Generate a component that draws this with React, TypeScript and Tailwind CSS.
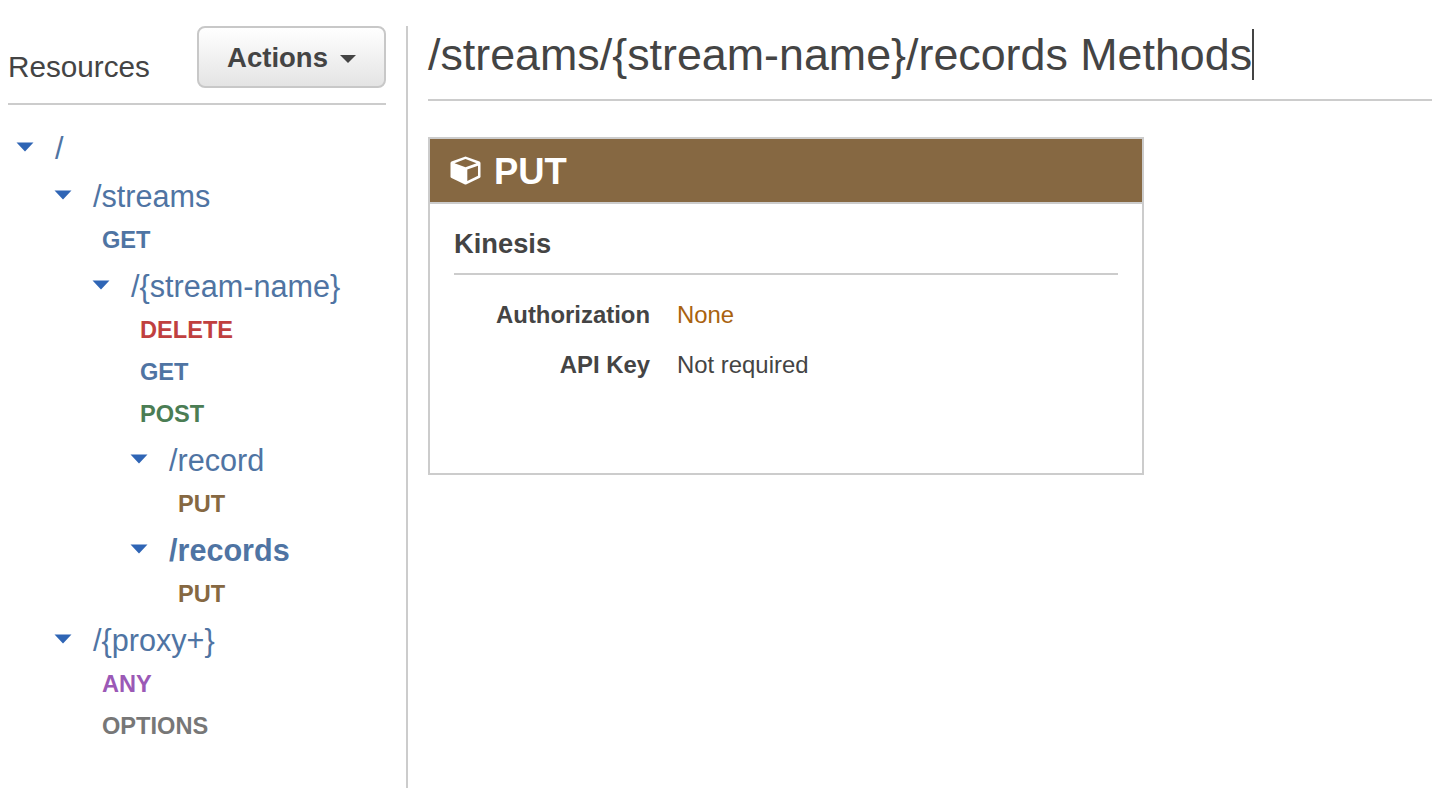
const font = { fontFamily: '"Liberation Sans", Arial, sans-serif' };

function Caret({ className = "" }: { className?: string }) {
  return (
    <svg width="18" height="10" viewBox="0 0 18 10" className={`shrink-0 ${className}`}>
      <path d="M0.5 0.5 H17.5 L9 9.5 Z" fill="#2f65b5" />
    </svg>
  );
}

function Res({ label, ml, bold = false }: { label: string; ml: string; bold?: boolean }) {
  return (
    <div className={`flex h-[48px] items-center pt-[1px] ${ml}`}>
      <Caret className="-mt-[3px]" />
      <span className={`ml-[21px] text-[30.6px] leading-none text-[#4f74a3] ${bold ? "font-bold" : ""}`}>{label}</span>
    </div>
  );
}

function Method({ label, ml, color }: { label: string; ml: string; color: string }) {
  return (
    <div className={`flex h-[42px] items-center text-[23.6px] font-bold leading-none ${ml} ${color}`}>{label}</div>
  );
}

export default function App() {
  return (
    <div className="flex h-[788px] w-[1432px] overflow-hidden bg-white pt-[26px] text-[#444444]" style={font}>
      <aside className="ml-[8px] flex w-[378px] shrink-0 flex-col">
        <div className="flex h-[79px] items-start justify-between border-b-2 border-[#cccccc]">
          <span className="mt-[24px] text-[29.7px] leading-[34px] text-[#444444]">Resources</span>
          <button className="flex h-[62px] w-[189px] items-center justify-center gap-[12px] rounded-[8px] border-2 border-[#c8c8c8] bg-gradient-to-b from-white to-[#e4e4e4] pt-[1px] text-[27.5px] font-bold text-[#444444]">
            Actions
            <svg width="16" height="8" viewBox="0 0 16 8" className="mt-[2px]">
              <path d="M0 0 H16 L8 8 Z" fill="#444444" />
            </svg>
          </button>
        </div>
        <div className="flex flex-col pt-[19px]">
          <Res label="/" ml="ml-[8px]" />
          <Res label="/streams" ml="ml-[46px]" />
          <Method label="GET" ml="ml-[94px]" color="text-[#4f74a3]" />
          <Res label="/{stream-name}" ml="ml-[84px]" />
          <Method label="DELETE" ml="ml-[132px]" color="text-[#c0403f]" />
          <Method label="GET" ml="ml-[132px]" color="text-[#4f74a3]" />
          <Method label="POST" ml="ml-[132px]" color="text-[#4b7d54]" />
          <Res label="/record" ml="ml-[122px]" />
          <Method label="PUT" ml="ml-[170px]" color="text-[#866842]" />
          <Res label="/records" ml="ml-[122px]" bold />
          <Method label="PUT" ml="ml-[170px]" color="text-[#866842]" />
          <Res label="/{proxy+}" ml="ml-[46px]" />
          <Method label="ANY" ml="ml-[94px]" color="text-[#9b59b6]" />
          <Method label="OPTIONS" ml="ml-[94px]" color="text-[#777777]" />
        </div>
      </aside>
      <div className="ml-[20px] w-[2px] shrink-0 bg-[#cccccc]" />
      <main className="ml-[20px] flex min-w-0 flex-1 flex-col">
        <div className="flex h-[75px] items-start border-b-2 border-[#cccccc]">
          <h1 className="mt-[3px] border-r-2 border-[#444444] pb-[1px] text-[44.8px] font-normal leading-[50px] text-[#444444]">
            /streams/{"{stream-name}"}/records Methods
          </h1>
        </div>
        <section className="mt-[36px] flex h-[338px] w-[716px] flex-col border-2 border-[#cccccc]">
          <header className="flex h-[65px] shrink-0 items-center gap-[13px] border-b-2 border-[#cccccc] bg-[#866842] pl-[20px] text-[36.4px] font-bold leading-none text-white">
            <svg width="31" height="29" viewBox="0 0 31 29">
              <path
                d="M15.5 0.5 L29.5 5.5 Q30.5 6 30.5 7 V20.5 Q30.5 21.5 29.5 22 L16 28.5 Q15.5 28.7 15 28.5 L1.5 22 Q0.5 21.5 0.5 20.5 V7 Q0.5 6 1.5 5.5 Z"
                fill="white"
              />
              <path d="M15.5 3 L26.5 7.2 L15.5 11.2 L4.5 7.2 Z" fill="#866842" />
              <path d="M17.3 13.6 L28 9.8 V19.8 L17.3 25 Z" fill="#866842" />
            </svg>
            <span className="pt-[4px]">PUT</span>
          </header>
          <div className="mx-[24px] flex h-[71px] items-center border-b-2 border-[#cccccc] pt-[10px]">
            <h2 className="text-[27.3px] font-bold leading-none text-[#444444]">Kinesis</h2>
          </div>
          <dl className="mt-[26px] grid grid-cols-[196px_1fr] gap-x-[27px] gap-y-[22px] pl-[24px] text-[23.9px] leading-[28px]">
            <dt className="text-right font-bold">Authorization</dt>
            <dd className="text-[#a9620f]">None</dd>
            <dt className="text-right font-bold">API Key</dt>
            <dd>Not required</dd>
          </dl>
        </section>
      </main>
    </div>
  );
}
